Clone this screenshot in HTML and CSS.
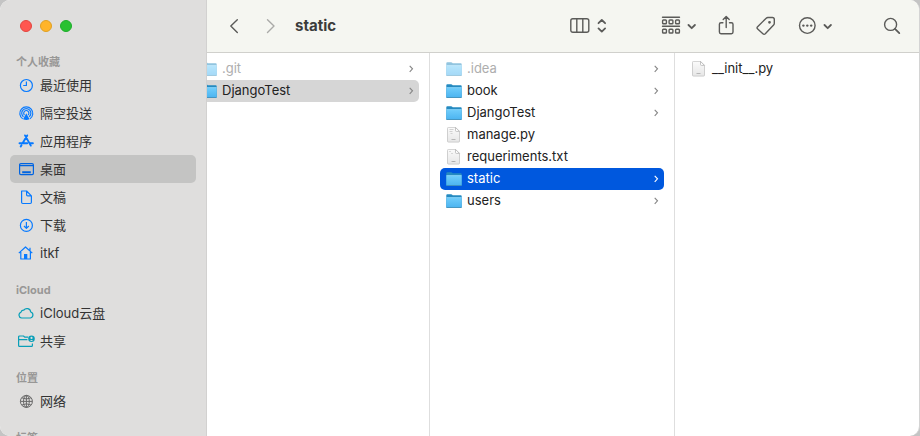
FILE: index.html
```
<!DOCTYPE html>
<html lang="zh-CN">
<head>
<meta charset="utf-8">
<meta name="viewport" content="width=device-width, initial-scale=1">
<title>static</title>
<link rel="stylesheet" href="styles.css">
</head>
<body>
<svg class="defs" aria-hidden="true">
  <defs>
    <linearGradient id="folder-front" x1="0" y1="0" x2="0" y2="1"><stop offset="0" stop-color="#70cdfb"/><stop offset="1" stop-color="#4bb4f0"/></linearGradient>
    <linearGradient id="paper" x1="0" y1="0" x2="0" y2="1"><stop offset="0" stop-color="#fbfbfb"/><stop offset="1" stop-color="#e6e6e6"/></linearGradient>
  </defs>
  <symbol id="folder" viewBox="0 0 16 16">
    <path d="M.3 2.3q0-1 1-1h3.9q.6 0 1 .5l.5.5h8q1 0 1 1V14q0 .7-.7.7H1q-.7 0-.7-.7z" fill="#258ac0"/>
    <path d="M.3 4.6h15.4V14q0 .6-.7.6H1q-.7 0-.7-.6z" fill="url(#folder-front)"/>
    <path d="M.5 4.6h15" stroke="#98ddfd" stroke-width=".7"/>
    <path d="M.5 14.5h15" stroke="#428fb9" stroke-width=".8"/>
  </symbol>
  <symbol id="file" viewBox="0 0 16 16">
    <path d="M2.4.4h7.1l4 4v9.8q0 .9-.9.9H2.4q-.9 0-.9-.9V1.3q0-.9.9-.9z" fill="url(#paper)" stroke="#c4c4c4" stroke-width=".8"/>
    <path d="M9.5.4v3.1q0 .9.9.9h3.1z" fill="#fff" stroke="#b5b5b5" stroke-width=".8"/>
    <path d="M5.5 12.5h4" stroke="#aaa" stroke-width=".8"/>
  </symbol>
  <symbol id="code-file" viewBox="0 0 16 16">
    <use href="#file"/><path d="M3.5 2.5h4m-4 2h3m-2 2h2" stroke="#c8c8c8" stroke-width=".8"/>
  </symbol>
  <symbol id="text-file" viewBox="0 0 16 16">
    <use href="#file"/><path d="M3.5 2.5h1m1 2h1M6.5 12.5h2" stroke="#aaa" stroke-width=".8"/>
  </symbol>
  <symbol id="next" viewBox="0 0 6 10"><path d="m1.7 1.8 2.8 3-2.8 3" fill="none" stroke="currentColor" stroke-width="1.1"/></symbol>
  <symbol id="down" viewBox="0 0 10 10"><path d="m2.5 4 3.2 3.2L8.9 4" fill="none" stroke="currentColor" stroke-width="1.8" stroke-linecap="round" stroke-linejoin="round"/></symbol>
</svg>

<div class="window">
  <aside class="sidebar">
    <div class="lights">
      <button class="light close" aria-label="关闭"></button>
      <button class="light minimize" aria-label="最小化"></button>
      <button class="light zoom" aria-label="缩放"></button>
    </div>
    <nav>
      <section class="group">
        <h2>个人收藏</h2>
        <a class="place" href="#"><svg viewBox="0 0 16 16"><circle cx="8.4" cy="8.5" r="6"/><path d="M8.4 4.5v4H5.2"/></svg>最近使用</a>
        <a class="place" href="#"><svg viewBox="0 0 16 16"><path d="M4.7 13.8a6.5 6.5 0 1 1 7.2 0M5.5 11.8a4.6 4.6 0 1 1 5.6 0M6.5 10a2.6 2.6 0 1 1 3.6 0"/><path d="m8.3 8.3-3.2 6q3.2 1.4 6.4 0z" class="solid"/></svg>隔空投送</a>
        <a class="place" href="#"><svg class="bold" viewBox="0 0 16 16"><path d="m7 2.4 5.8 10.2M9.2 2.4 4.7 10M1.5 10.3h7.7m2.7 0h3M3.5 12.2l-.8 1.3"/></svg>应用程序</a>
        <a class="place selected" href="#" aria-current="page"><svg viewBox="0 0 16 16"><rect x="1.6" y="2.6" width="13.8" height="11" rx="1.3"/><path d="M2 4.7h13"/><path d="M4.2 11.2h8.6" class="thick"/></svg>桌面</a>
        <a class="place" href="#"><svg viewBox="0 0 16 16"><path d="M3.6 2h5l4.8 4.8v6.5q0 1.2-1.2 1.2H4.8q-1.2 0-1.2-1.2V2zm5 0v3.7q0 1.1 1.1 1.1h3.7"/></svg>文稿</a>
        <a class="place" href="#"><svg viewBox="0 0 16 16"><circle cx="8.4" cy="8.4" r="6"/><path d="M8.4 4.9v6.4M6 9l2.4 2.4L10.8 9"/></svg>下载</a>
        <a class="place" href="#"><svg viewBox="0 0 16 16"><path d="M.8 8.1 7.5 2l6.8 6.1M2.8 7v7h9.6V7M12 5.7V2.8"/><path d="M6 14V9h3.3v5z" class="solid"/></svg>itkf</a>
      </section>
      <section class="group">
        <h2>iCloud</h2>
        <a class="place cloud" href="#"><svg viewBox="0 0 16 16"><path d="M3.6 13A3 3 0 0 1 3 7.2a2.5 2.5 0 0 1 2.8-2A3.8 3.8 0 0 1 12.7 7a3.1 3.1 0 0 1-.2 6z"/></svg>iCloud云盘</a>
        <a class="place cloud" href="#"><svg viewBox="0 0 16 16"><path d="M10.2 4.2H6.7L5.5 3H1.6q-1 0-1 1v8.4q0 1 1 1h11.8q1 0 1-1V10.5M.6 6.7h8.8"/><circle cx="13.5" cy="5.8" r="3.3" class="solid"/><path d="M12 8q1.5-2.2 3 0z" class="person"/><circle cx="13.5" cy="4.9" r="1.1" class="person"/></svg>共享</a>
      </section>
      <section class="group">
        <h2>位置</h2>
        <a class="place network" href="#"><svg viewBox="0 0 16 16"><circle cx="8.4" cy="8.4" r="6"/><ellipse cx="8.4" cy="8.4" rx="2.9" ry="6"/><path d="M2.4 8.4h12M8.4 2.4v12M3.8 4.8q4.6 2.4 9.2 0M3.8 12q4.6-2.4 9.2 0"/></svg>网络</a>
      </section>
      <section class="group">
        <h2>标签</h2>
      </section>
    </nav>
  </aside>

  <main class="main">
    <header class="toolbar">
      <button class="tool" aria-label="后退"><svg width="16" height="20" viewBox="0 0 16 20"><path d="m11.3 3.8-6.5 6.3 6.5 6.3"/></svg></button>
      <button class="tool forward" aria-label="前进" disabled><svg width="13" height="20" viewBox="0 0 13 20"><path d="m5.5 3.8 6.5 6.3-6.5 6.3"/></svg></button>
      <h1>static</h1>
      <button class="tool view" aria-label="分栏显示">
        <svg width="20" height="20" viewBox="0 0 20 20"><rect x=".8" y="2.7" width="18" height="13.6" rx="2"/><path d="M6.8 3v13M12.8 3v13"/></svg>
        <svg class="arrows" width="14" height="20" viewBox="0 0 14 20"><path d="m2.5 7.2 3.3-3.2 3.3 3.2M2.5 12.4l3.3 3.2 3.3-3.2"/></svg>
      </button>
      <button class="tool spaced" aria-label="分组">
        <svg width="22" height="20" viewBox="0 0 22 20"><path d="M2.5 1.3h17M2.5 10.3h17"/><rect x="2.6" y="4" width="3.8" height="3.8" rx=".8"/><rect x="9.1" y="4" width="3.8" height="3.8" rx=".8"/><rect x="15.6" y="4" width="3.8" height="3.8" rx=".8"/><rect x="2.6" y="13.2" width="3.8" height="3.8" rx=".8"/><rect x="9.1" y="13.2" width="3.8" height="3.8" rx=".8"/><rect x="15.6" y="13.2" width="3.8" height="3.8" rx=".8"/></svg>
        <svg width="10" height="10"><use href="#down"/></svg>
      </button>
      <button class="tool" aria-label="共享"><svg width="20" height="20" viewBox="0 0 20 20"><path d="M6.9 6.7H5q-1.6 0-1.6 1.6v7.8q0 1.6 1.6 1.6h10.4q1.6 0 1.6-1.6V8.3q0-1.6-1.6-1.6h-1.9M10.2 11.5V.7M7.2 3.5l3-3 3 3"/></svg></button>
      <button class="tool" aria-label="标签"><svg width="20" height="20" viewBox="0 0 20 20"><path d="M10.2 2.2q.7-.7 1.7-.7h4.5q1.9 0 1.9 1.9v3.8q0 1-.7 1.7L9.3 17.8q-1.2 1.2-2.4 0l-5.2-4.7q-1.3-1.2-.1-2.4z"/><circle cx="13.5" cy="6.3" r=".7"/></svg></button>
      <button class="tool" aria-label="操作">
        <svg width="22" height="20" viewBox="0 0 22 20"><circle cx="11.3" cy="9.6" r="7.8"/><g class="dots"><circle cx="7.4" cy="9.6" r="1.2"/><circle cx="11.3" cy="9.6" r="1.2"/><circle cx="15.2" cy="9.6" r="1.2"/></g></svg>
        <svg width="10" height="10"><use href="#down"/></svg>
      </button>
      <button class="tool spaced" aria-label="搜索"><svg width="20" height="20" viewBox="0 0 20 20"><circle cx="8.6" cy="8.4" r="6"/><path d="m13 12.8 4.3 4.3" class="handle"/></svg></button>
    </header>

    <div class="browser">
      <div class="columns">
        <ul class="column">
          <li><a class="row hidden-item" href="#"><svg class="icon"><use href="#folder"/></svg><span>.git</span><svg class="next"><use href="#next"/></svg></a></li>
          <li><a class="row on-path" href="#"><svg class="icon"><use href="#folder"/></svg><span>DjangoTest</span><svg class="next"><use href="#next"/></svg></a></li>
        </ul>
        <ul class="column">
          <li><a class="row hidden-item" href="#"><svg class="icon"><use href="#folder"/></svg><span>.idea</span><svg class="next"><use href="#next"/></svg></a></li>
          <li><a class="row" href="#"><svg class="icon"><use href="#folder"/></svg><span>book</span><svg class="next"><use href="#next"/></svg></a></li>
          <li><a class="row" href="#"><svg class="icon"><use href="#folder"/></svg><span>DjangoTest</span><svg class="next"><use href="#next"/></svg></a></li>
          <li><a class="row" href="#"><svg class="icon"><use href="#code-file"/></svg><span>manage.py</span></a></li>
          <li><a class="row" href="#"><svg class="icon"><use href="#text-file"/></svg><span>requeriments.txt</span></a></li>
          <li><a class="row active" href="#" aria-current="true"><svg class="icon"><use href="#folder"/></svg><span>static</span><svg class="next"><use href="#next"/></svg></a></li>
          <li><a class="row" href="#"><svg class="icon"><use href="#folder"/></svg><span>users</span><svg class="next"><use href="#next"/></svg></a></li>
        </ul>
        <ul class="column last">
          <li><a class="row" href="#"><svg class="icon"><use href="#file"/></svg><span>__init__.py</span></a></li>
        </ul>
      </div>
    </div>
  </main>
</div>
</body>
</html>
```
FILE: styles.css
```
* {
  box-sizing: border-box;
}

body {
  margin: 0;
  background: #c4c4c4;
  color: #222;
  font: 13px/20px Inter, "Noto Sans CJK SC", sans-serif;
}

h1, h2, ul {
  margin: 0;
  padding: 0;
}

ul {
  list-style: none;
}

a {
  color: inherit;
  text-decoration: none;
}

button {
  padding: 0;
  border: 0;
  background: none;
  color: inherit;
}

svg {
  display: block;
  flex: none;
}

.defs {
  position: absolute;
  width: 0;
  height: 0;
}

.window {
  display: flex;
  height: 100vh;
  overflow: hidden;
  border-right: 1px solid #d4d4d4;
  border-radius: 10px;
  background: #fff;
}

/* Sidebar */

.sidebar {
  flex: none;
  width: 207px;
  overflow: hidden;
  padding: 0 10px;
  border-right: 1px solid #d2d1d0;
  background: #dfdedd;
}

.lights {
  display: flex;
  gap: 8px;
  height: 53px;
  padding: 20px 0 0 10px;
}

.light {
  width: 12px;
  height: 12px;
  border: 1px solid;
  border-radius: 50%;
}

.close {
  border-color: #e2463f;
  background: #ff5650;
}

.minimize {
  border-color: #dfa023;
  background: #ffb429;
}

.zoom {
  border-color: #1dad2b;
  background: #28c131;
}

.group {
  margin-bottom: 14px;
}

h2 {
  padding-left: 6px;
  color: #989796;
  font-size: 11px;
  font-weight: 700;
  line-height: 18px;
}

.place {
  display: flex;
  align-items: center;
  gap: 6px;
  height: 28px;
  padding-left: 8px;
  border-radius: 5px;
  color: #333;
}

.place.selected {
  background: #c4c4c3;
}

.place svg {
  width: 16px;
  height: 16px;
  overflow: visible;
  fill: none;
  stroke: #087aff;
  stroke-width: 1.2;
  stroke-linejoin: round;
}

.place .solid {
  fill: #087aff;
  stroke: none;
}

.place .thick {
  stroke-width: 2;
}

.place .bold {
  stroke-width: 1.9;
  stroke-linecap: round;
}

.place.selected svg {
  stroke: #0064e1;
}

.cloud svg {
  stroke: #099fb8;
}

.cloud .solid {
  fill: #099fb8;
}

.cloud .person {
  fill: #dfdedd;
  stroke: none;
}

.network svg {
  stroke: #696969;
  stroke-width: 1;
}

/* Toolbar */

.main {
  display: flex;
  flex: 1;
  flex-direction: column;
  min-width: 0;
}

.toolbar {
  display: flex;
  flex: none;
  align-items: center;
  gap: 20px;
  height: 53px;
  padding: 0 17px 0 19px;
  border-bottom: 1px solid #d0d0cc;
  background: #f5f6f1;
}

h1 {
  flex: 1;
  color: #3c3c3b;
  font-size: 15px;
  font-weight: 700;
}

.tool {
  display: flex;
  align-items: center;
  gap: 4px;
  color: #5b5b59;
}

.tool svg {
  overflow: visible;
  fill: none;
  stroke: currentColor;
  stroke-width: 1.4;
  stroke-linecap: round;
  stroke-linejoin: round;
}

.tool .dots {
  fill: currentColor;
  stroke: none;
}

.tool .arrows,
.tool .handle {
  stroke-width: 1.8;
}

.forward {
  color: #aaaaa8;
}

.view {
  gap: 6px;
}

.spaced {
  margin-left: 30px;
}

/* Column browser */

.browser {
  flex: 1;
  overflow: hidden;
}

.columns {
  display: flex;
  height: 100%;
  margin-left: -22px;
}

.column {
  flex: none;
  width: 245px;
  padding: 5px 10px;
  border-right: 1px solid #dedede;
}

.column.last {
  flex: 1;
  border-right: 0;
}

.row {
  display: flex;
  align-items: center;
  gap: 5px;
  height: 22px;
  padding: 0 5px 0 6px;
  border-radius: 5px;
}

.row span {
  flex: 1;
  padding-bottom: 2px;
}

.icon {
  width: 16px;
  height: 16px;
}

.next {
  width: 6px;
  height: 10px;
  color: #858585;
}

.hidden-item span {
  color: #aeaeae;
}

.hidden-item .icon {
  opacity: .5;
}

.on-path {
  background: #d6d6d6;
}

.active {
  background: #0058de;
  color: #fff;
}

.active .next {
  color: #fff;
}
```
